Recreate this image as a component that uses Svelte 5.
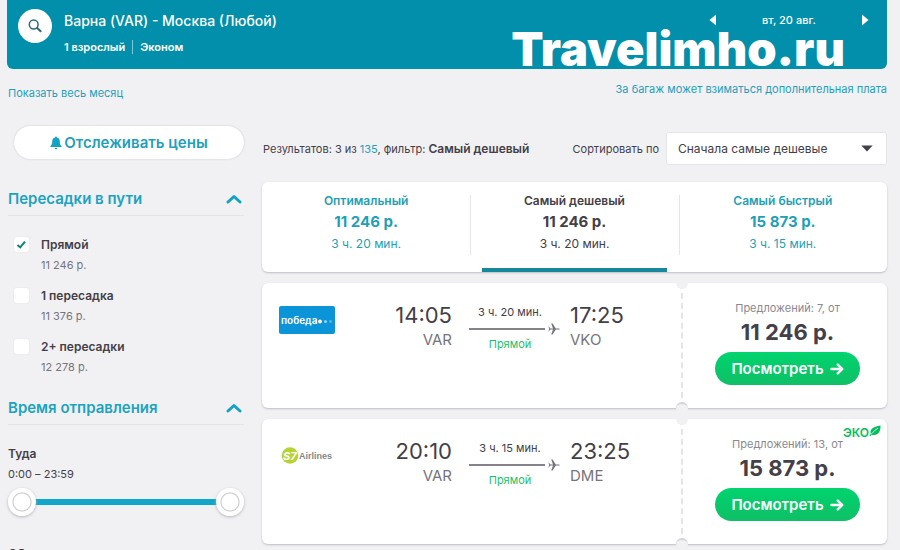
<script>
  const tabs = [
    { id: 'best', name: 'Оптимальный', price: '11 246 р.', time: '3 ч. 20 мин.' },
    { id: 'cheap', name: 'Самый дешевый', price: '11 246 р.', time: '3 ч. 20 мин.' },
    { id: 'fast', name: 'Самый быстрый', price: '15 873 р.', time: '3 ч. 15 мин.' }
  ];
  const flights = [
    { airline: 'pobeda', dep: '14:05', from: 'VAR', time: '3 ч. 20 мин.', arr: '17:25', to: 'VKO', offers: 7, price: '11 246 р.', eco: false },
    { airline: 's7', dep: '20:10', from: 'VAR', time: '3 ч. 15 мин.', arr: '23:25', to: 'DME', offers: 13, price: '15 873 р.', eco: true }
  ];
  let stops = $state([
    { id: 'direct', name: 'Прямой', price: '11 246 р.', on: true },
    { id: 'one', name: '1 пересадка', price: '11 376 р.', on: false },
    { id: 'two', name: '2+ пересадки', price: '12 278 р.', on: false }
  ]);
  let active = $state('cheap');
  let start = $state(0);
  let end = $state(1439);

  function clock(m) {
    return Math.floor(m / 60) + ':' + String(m % 60).padStart(2, '0');
  }
</script>

{#snippet chevron()}
  <svg width="16" height="10" viewBox="0 0 16 10" aria-hidden="true">
    <path d="M2 8 L8 2.5 L14 8" fill="none" stroke="#12a2c4" stroke-width="3" stroke-linecap="round" stroke-linejoin="round" />
  </svg>
{/snippet}

<div class="page">
  <header class="top">
    <button class="search" aria-label="Изменить поиск">
      <svg width="16" height="16" viewBox="0 0 16 16" aria-hidden="true">
        <circle cx="6.7" cy="6.5" r="4.4" fill="none" stroke="#2d6b7a" stroke-width="1.5" />
        <path d="M10.2 10 L13.6 13.3" stroke="#2d6b7a" stroke-width="2" stroke-linecap="round" />
      </svg>
    </button>
    <div class="query">
      <h1>Варна (VAR) - Москва (Любой)</h1>
      <p><span>1 взрослый</span><span class="cabin">Эконом</span></p>
    </div>
    <nav class="dates" aria-label="Дата вылета">
      <button aria-label="Предыдущий день">
        <svg width="8" height="12" viewBox="0 0 8 12" aria-hidden="true"><path d="M7 0.5 V11.5 L0.5 6Z" fill="#fff" /></svg>
      </button>
      <span>вт, 20 авг.</span>
      <button aria-label="Следующий день">
        <svg width="8" height="12" viewBox="0 0 8 12" aria-hidden="true"><path d="M1 0.5 V11.5 L7.5 6Z" fill="#fff" /></svg>
      </button>
    </nav>
    <div class="brand">Travelimho.ru</div>
  </header>

  <div class="columns">
    <aside>
      <a class="month" href="#month">Показать весь месяц</a>
      <button class="track">
        <svg width="12" height="14" viewBox="0 0 12 14" aria-hidden="true">
          <path d="M6 0.6 C6.6 0.6 6.9 1 6.9 1.6 C9 2 9.8 3.7 9.8 5.6 C9.8 8.3 10.4 9.2 11.6 10.2 V10.9 H0.4 V10.2 C1.6 9.2 2.2 8.3 2.2 5.6 C2.2 3.7 3 2 5.1 1.6 C5.1 1 5.4 0.6 6 0.6Z M4.6 11.9 H7.4 C7.2 12.8 6.7 13.2 6 13.2 C5.3 13.2 4.8 12.8 4.6 11.9Z" fill="#12a2c4" />
        </svg>
        Отслеживать цены
      </button>

      <section>
        <h2>Пересадки в пути {@render chevron()}</h2>
        <ul class="stops">
          {#each stops as s (s.id)}
            <li>
              <label>
                <input type="checkbox" bind:checked={s.on} />
                <span class="stop"><b>{s.name}</b><span>{s.price}</span></span>
              </label>
            </li>
          {/each}
        </ul>
      </section>

      <section>
        <h2>Время отправления {@render chevron()}</h2>
        <div class="leg">
          <b>Туда</b>
          <span>{clock(start)} – {clock(end)}</span>
          <div class="range">
            <input type="range" min="0" max="1439" bind:value={start} aria-label="Вылет туда не раньше" />
            <input type="range" min="0" max="1439" bind:value={end} aria-label="Вылет туда не позже" />
          </div>
        </div>
        <div class="leg back"><b>Обратно</b></div>
      </section>
    </aside>

    <main>
      <a class="bags" href="#bags">За багаж может взиматься дополнительная плата</a>
      <div class="bar">
        <p>Результатов: 3 из <a href="#all">135</a>, фильтр: <b>Самый дешевый</b></p>
        <div class="sort">
          <label for="sort">Сортировать по</label>
          <div class="select">
            <select id="sort">
              <option>Сначала самые дешевые</option>
              <option>Сначала самые быстрые</option>
            </select>
            <svg width="12" height="7" viewBox="0 0 12 7" aria-hidden="true"><path d="M0.3 0.5 H11.7 L6 6.5Z" fill="#444048" /></svg>
          </div>
        </div>
      </div>

      <div class="tabs">
        {#each tabs as t (t.id)}
          <button class:active={active === t.id} onclick={() => (active = t.id)}>
            <span class="name">{t.name}</span>
            <span class="sum">{t.price}</span>
            <span class="dur">{t.time}</span>
          </button>
        {/each}
      </div>

      {#each flights as f (f.airline)}
        <article class="card">
          <div class="trip">
            <div class="logo">
              {#if f.airline === 'pobeda'}
                <svg width="56" height="28" viewBox="0 0 56 28" role="img" aria-label="Победа">
                  <rect width="56" height="28" rx="2" fill="#0b95d8" />
                  <text x="2" y="18" font-family="Inter, sans-serif" font-size="10" font-weight="600" fill="#fff">победа</text>
                  <circle cx="41" cy="15.5" r="1.9" fill="#fff" />
                  <circle cx="46.5" cy="15.5" r="1.6" fill="#8fd0f0" />
                  <circle cx="51.5" cy="15.5" r="1.4" fill="#55b5e6" />
                </svg>
              {:else}
                <svg width="56" height="28" viewBox="0 0 56 28" role="img" aria-label="S7 Airlines">
                  <circle cx="11" cy="13.5" r="8.3" fill="#b5d334" />
                  <text x="4" y="18" font-family="Inter, sans-serif" font-size="11" font-weight="700" font-style="italic" fill="#fff">S7</text>
                  <text x="20" y="17" font-family="'Liberation Sans', sans-serif" font-size="9" font-weight="700" fill="#85878a">Airlines</text>
                </svg>
              {/if}
            </div>
            <div class="point from"><strong>{f.dep}</strong><span>{f.from}</span></div>
            <div class="path">
              <span>{f.time}</span>
              <div class="line">
                <i></i>
                <svg width="12" height="12" viewBox="0 0 12 12" aria-hidden="true">
                  <path d="M0.4 3.2 L2.4 5.4 H5 L3.2 0.6 H4.6 L7.8 5.4 H10.4 C11.3 5.4 11.8 5.7 11.8 6 C11.8 6.3 11.3 6.6 10.4 6.6 H7.8 L4.6 11.4 H3.2 L5 6.6 H2.4 L0.4 8.8 L1.2 6Z" fill="#77737c" />
                </svg>
              </div>
              <span class="direct">Прямой</span>
            </div>
            <div class="point"><strong>{f.arr}</strong><span>{f.to}</span></div>
          </div>
          <div class="offer">
            {#if f.eco}
              <span class="eco">ЭКО<svg width="12" height="12" viewBox="0 0 12 12" aria-hidden="true">
                <path d="M11.5 0.5 C11.8 6 9.6 10 5 10 C4 10 3.2 9.8 2.6 9.4 L1.2 11.4 L0.5 10.8 L1.8 8.8 C0.4 4.6 4 1.6 11.5 0.5Z" fill="#00bf5c" />
                <path d="M2.4 8.8 C4.4 6.8 6.2 4.8 9 3.2" fill="none" stroke="#fff" stroke-width="0.8" />
              </svg></span>
            {/if}
            <span class="count">Предложений: {f.offers}, от</span>
            <strong>{f.price}</strong>
            <button>
              Посмотреть
              <svg width="14" height="12" viewBox="0 0 14 12" aria-hidden="true">
                <path d="M1.5 6 H12 M7.8 1.6 L12.3 6 L7.8 10.4" fill="none" stroke="#fff" stroke-width="2.4" stroke-linecap="round" stroke-linejoin="round" />
              </svg>
            </button>
          </div>
        </article>
      {/each}
    </main>
  </div>
</div>

<style>
  :global(body) { margin: 0; background: #f1f1f4; }
  .page {
    box-sizing: border-box;
    height: 100vh;
    overflow: hidden;
    padding: 0 13px 0 7px;
    background: #f1f1f4;
    color: #444048;
    font: 11px/20px Inter, "Noto Sans", sans-serif;
  }
  h1, h2, p, ul { margin: 0; padding: 0; }
  b { font-size: 12px; font-weight: 600; }
  button { padding: 0; border: 0; background: none; font: inherit; color: inherit; cursor: pointer; }
  a { color: #1f9fbe; text-decoration: none; }
  svg { display: block; flex: none; }

  .top {
    position: relative;
    display: flex;
    align-items: flex-start;
    box-sizing: border-box;
    height: 69px;
    padding: 9px 18px 0 11px;
    border-radius: 0 0 6px 6px;
    background: #028fab;
    color: #fff;
  }
  .search {
    display: grid;
    place-items: center;
    width: 34px;
    height: 34px;
    border-radius: 50%;
    background: #fff;
  }
  .query { flex: 1; padding-left: 12px; }
  h1 { font-size: 14px; line-height: 24px; font-weight: 500; }
  .query p { margin-top: 4px; font-weight: 600; }
  .cabin { margin-left: 7px; padding-left: 7px; border-left: 1px solid #7fc6d5; }
  .dates { display: flex; align-items: center; justify-content: space-between; width: 160px; height: 22px; font-weight: 500; }
  .brand {
    position: absolute;
    right: 42px;
    bottom: 2px;
    font: 900 47px/36px "Arial Black", Inter, sans-serif;
    pointer-events: none;
  }

  .columns { display: grid; grid-template-columns: 237px minmax(0, 1fr); gap: 18px; }
  aside { display: flex; flex-direction: column; padding: 16px 0 0 1px; }
  .month { line-height: 16px; }
  .track {
    display: flex;
    align-items: center;
    justify-content: center;
    gap: 2px;
    height: 33px;
    margin: 25px 0 28px 6px;
    border-radius: 17px;
    background: #fff;
    box-shadow: 0 0 2px #c4c4cc;
    color: #1f9fbe;
    font-size: 15px;
    font-weight: 600;
  }
  h2 {
    display: flex;
    align-items: center;
    justify-content: space-between;
    padding: 0 2px 4px 0;
    border-bottom: 1px solid #e4e4e9;
    color: #1ba3c2;
    font-size: 15px;
    line-height: 24px;
    font-weight: 600;
  }
  .stops { display: grid; gap: 11px; margin: 19px 0; padding-left: 6px; list-style: none; }
  .stops label { display: flex; gap: 12px; }
  .stops input {
    appearance: none;
    width: 15px;
    height: 15px;
    margin: 2px 0 0;
    border-radius: 2px;
    background: #fff;
    box-shadow: 0 0 1px #c8c8d0;
  }
  .stops input:checked {
    background: #fff url("data:image/svg+xml,%3Csvg xmlns='http://www.w3.org/2000/svg' viewBox='0 0 15 15'%3E%3Cpath d='M3.5 8 L6.2 10.4 L11 4.6' fill='none' stroke='%230c8577' stroke-width='2'/%3E%3C/svg%3E");
  }
  .stop { display: flex; flex-direction: column; color: #77747c; }
  .stop b { color: #444048; }
  .leg { display: flex; flex-direction: column; margin-top: 19px; }
  .leg.back { margin-top: 28px; }
  .range { position: relative; height: 28px; margin-top: 4px; }
  .range::before {
    content: "";
    position: absolute;
    inset: 11px 14px;
    background: #12a6c8;
    box-shadow: 0 0 2px #d9f4fa;
  }
  .range input {
    appearance: none;
    position: absolute;
    inset: 0;
    width: 100%;
    height: 28px;
    margin: 0;
    background: none;
    pointer-events: none;
  }
  .range input::-webkit-slider-thumb {
    appearance: none;
    width: 28px;
    height: 28px;
    border-radius: 50%;
    background: radial-gradient(circle, #fff 0 8px, #c6c6cb 9px, #fff 10px);
    box-shadow: 0 1px 3px #b0b0b8;
    pointer-events: auto;
  }

  main { display: flex; flex-direction: column; padding-top: 12px; }
  .bags { align-self: flex-end; line-height: 16px; }
  .bar { display: flex; align-items: center; justify-content: space-between; margin: 35px 0 17px; }
  .bar p { padding-left: 1px; }
  .sort { display: flex; align-items: center; gap: 7px; }
  .select { position: relative; }
  .select select {
    appearance: none;
    width: 221px;
    height: 33px;
    padding: 0 11px;
    border: 1px solid #e6e6ea;
    border-radius: 3px;
    background: #fff;
    color: inherit;
    font: 12px/20px Inter, "Noto Sans", sans-serif;
  }
  .select svg { position: absolute; right: 14px; top: 13px; pointer-events: none; }

  .tabs, .card { border-radius: 6px; background: #fff; box-shadow: 0 1px 2px #bdbdc6; }
  .tabs { display: grid; grid-template-columns: repeat(3, 1fr); height: 90px; }
  .tabs button {
    position: relative;
    display: flex;
    flex-direction: column;
    align-items: center;
    padding-top: 9px;
    color: #1f9fb8;
  }
  .tabs button + button::before {
    content: "";
    position: absolute;
    left: 0;
    top: 13px;
    height: 60px;
    border-left: 1px solid #e6e6ea;
  }
  .tabs .active { color: #444048; }
  .tabs .active::after {
    content: "";
    position: absolute;
    left: 12px;
    right: 12px;
    bottom: 0;
    height: 4px;
    background: #17879b;
  }
  .name { font-size: 12px; font-weight: 600; }
  .sum { font-size: 15px; line-height: 22px; font-weight: 700; }
  .dur { font-size: 12px; line-height: 22px; }

  .card { display: flex; height: 125px; margin-top: 11px; }
  .trip { display: flex; flex: 1; padding: 18px 51px 0 17px; }
  .logo { flex: 1; padding-top: 5px; }
  .point { display: flex; flex-direction: column; width: 60px; font-size: 15px; color: #77747c; }
  .point strong { color: #444048; font-size: 22px; line-height: 28px; font-weight: 400; }
  .point span { line-height: 22px; }
  .from { align-items: flex-end; }
  .path { display: flex; flex-direction: column; width: 91px; margin: 0 10px 0 17px; text-align: center; }
  .path > span { padding-right: 9px; line-height: 22px; }
  .line { display: flex; align-items: center; gap: 3px; height: 12px; }
  .line i { flex: 1; height: 2px; background: #85828c; }
  .path .direct { color: #1fbf68; line-height: 18px; }
  .offer {
    position: relative;
    display: flex;
    flex-direction: column;
    align-items: center;
    box-sizing: border-box;
    width: 206px;
    padding: 15px 0 0 5px;
    border-left: 2px dashed #e4e4e9;
  }
  .offer::before, .offer::after {
    content: "";
    position: absolute;
    left: -7px;
    box-sizing: border-box;
    width: 12px;
    height: 12px;
    border-radius: 50%;
    background: #f1f1f4;
  }
  .offer::before { top: -6px; }
  .offer::after { bottom: -6px; border-top: 2px solid #d2d2d9; }
  .count { color: #8b8890; }
  .offer strong { font-size: 22px; line-height: 28px; font-weight: 700; }
  .offer button {
    display: flex;
    align-items: center;
    justify-content: center;
    gap: 6px;
    width: 145px;
    height: 33px;
    margin-top: 6px;
    border-radius: 17px;
    background: linear-gradient(#00d46f, #0fbf66);
    color: #fff;
    font-size: 15px;
    font-weight: 600;
  }
  .eco {
    position: absolute;
    top: 4px;
    right: 6px;
    display: flex;
    align-items: center;
    color: #00bf5c;
    font-size: 12px;
    font-weight: 600;
  }
  .eco svg { margin-bottom: 4px; }
</style>
